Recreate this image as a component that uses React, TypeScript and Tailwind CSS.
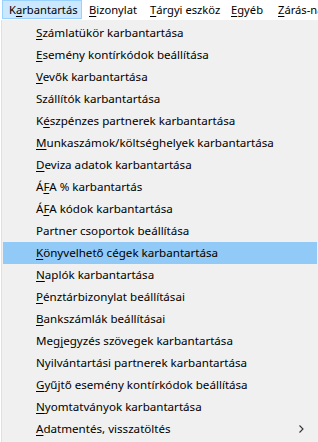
import React from "react";

type Item = { pre: string; u: string; post: string; sub?: boolean };

const items: Item[] = [
  { pre: "", u: "S", post: "zámlatükör karbantartása" },
  { pre: "", u: "E", post: "semény kontírkódok beállítása" },
  { pre: "", u: "V", post: "evők karbantartása" },
  { pre: "Szállítók karbantartása", u: "", post: "" },
  { pre: "K", u: "é", post: "szpénzes partnerek karbantartása" },
  { pre: "", u: "M", post: "unkaszámok/költséghelyek karbantartása" },
  { pre: "", u: "D", post: "eviza adatok karbantartása" },
  { pre: "Á", u: "F", post: "A % karbantartás" },
  { pre: "Á", u: "F", post: "A kódok karbantartása" },
  { pre: "Partner csoportok beállítása", u: "", post: "" },
  { pre: "", u: "K", post: "önyvelhető cégek karbantartása" },
  { pre: "", u: "N", post: "aplók karbantartása" },
  { pre: "", u: "P", post: "énztárbizonylat beállításai" },
  { pre: "", u: "B", post: "ankszámlák beállításai" },
  { pre: "Meg", u: "j", post: "egyzés szövegek karbantartása" },
  { pre: "Nyilvántartási partnerek karbantartása", u: "", post: "" },
  { pre: "", u: "G", post: "yűjtő esemény kontírkódok beállítása" },
  { pre: "", u: "N", post: "yomtatványok karbantartása" },
  { pre: "", u: "A", post: "datmentés, visszatöltés", sub: true },
];

const bar = [
  { pre: "K", u: "a", post: "rbantartás", w: "w-[80px]", active: true },
  { pre: "", u: "B", post: "izonylat", w: "w-[61px]" },
  { pre: "", u: "T", post: "árgyi eszköz", w: "w-[81px]" },
  { pre: "", u: "E", post: "gyéb", w: "w-[47px]" },
  { pre: "", u: "Z", post: "árás-naplók", w: "w-[60px]" },
];

export default function App() {
  return (
    <div
      className="w-[318px] h-[442px] bg-white overflow-hidden text-[11.6px] text-black"
      style={{ fontFamily: '"Noto Sans", "Open Sans", sans-serif' }}
    >
      <div className="h-[20px] flex pl-[2px] whitespace-nowrap text-[11.2px]">
        {bar.map((b, i) => (
          <div
            key={i}
            className={`${b.w} shrink-0 h-[19px] flex items-center pl-[6px] leading-none ${
              b.active ? "bg-[#cce8ff] border border-[#99d1ff]" : "border border-transparent"
            }`}
          >
            {b.pre}
            <span className="underline underline-offset-2">{b.u}</span>
            {b.post}
          </div>
        ))}
      </div>
      <div className="ml-[1px] h-[422px] bg-[#f0f0f0] border-l border-[#e0e0e0] pt-[2px] pr-[1px]">
        {items.map((it, i) => (
          <div
            key={i}
            className={`h-[22px] ml-[1px] flex items-center pl-[33px] pr-[12px] whitespace-nowrap leading-none ${
              i === 10 ? "bg-[#91c9f7]" : ""
            }`}
          >
            <span className="flex-1">
              {it.pre}
              {it.u && <span className="underline underline-offset-2">{it.u}</span>}
              {it.post}
            </span>
            {it.sub && (
              <svg width="5" height="8" viewBox="0 0 5 8" className="mr-[1px]">
                <path d="M0.5 0.5 L4 4 L0.5 7.5" fill="none" stroke="#333" strokeWidth="1.1" />
              </svg>
            )}
          </div>
        ))}
      </div>
    </div>
  );
}
